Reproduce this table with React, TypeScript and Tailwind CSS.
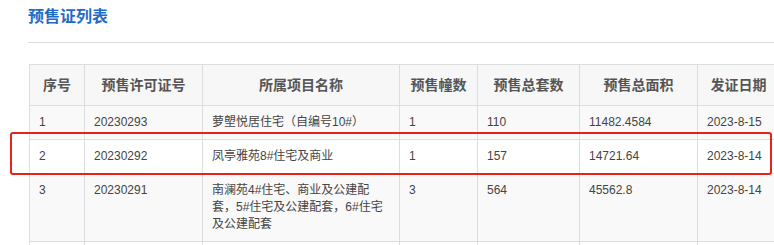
import React from "react";

const cols = [55, 118, 197, 78, 102, 118, 82];

const headers = ["序号", "预售许可证号", "所属项目名称", "预售幢数", "预售总套数", "预售总面积", "发证日期"];

const rows = [
  ["1", "20230293", "萝塱悦居住宅（自编号10#）", "1", "110", "11482.4584", "2023-8-15"],
  ["2", "20230292", "凤亭雅苑8#住宅及商业", "1", "157", "14721.64", "2023-8-14"],
  ["3", "20230291", "南澜苑4#住宅、商业及公建配套，5#住宅及公建配套，6#住宅及公建配套", "3", "564", "45562.8", "2023-8-14"],
];

export default function App() {
  return (
    <div
      className="relative w-[774px] h-[245px] overflow-hidden bg-white"
      style={{ fontFamily: '"Liberation Sans", "Noto Sans CJK SC", sans-serif' }}
    >
      <div className="pl-[28px] pt-[7px]">
        <h2 className="text-[16px] leading-[20px] font-bold text-[#1f6cc8]">预售证列表</h2>
        <div className="mt-[15px] h-px bg-[#dcdcdc]" />
      </div>

      <div className="ml-[29px] mt-[21px]">
        <table className="table-fixed border-collapse w-[750px]">
          <colgroup>
            {cols.map((w, i) => (
              <col key={i} style={{ width: w }} />
            ))}
          </colgroup>
          <thead>
            <tr className="bg-[#f7f7f7]">
              {headers.map((h) => (
                <th
                  key={h}
                  className="border border-[#dddddd] py-[11px] text-center text-[14px] leading-[18px] font-semibold text-[#555555]"
                >
                  {h}
                </th>
              ))}
            </tr>
          </thead>
          <tbody>
            {rows.map((r, ri) => (
              <tr key={ri} className={ri === 1 ? "bg-white" : "bg-[#f9f9f9]"}>
                {r.map((c, ci) => (
                  <td
                    key={ci}
                    className="border border-[#dddddd] px-[9px] py-2 align-top text-left text-[12px] leading-[17px] text-[#444444]"
                  >
                    {c}
                  </td>
                ))}
              </tr>
            ))}
            <tr className="bg-white">
              {cols.map((_, i) => (
                <td key={i} className="border border-[#dddddd] h-[20px]" />
              ))}
            </tr>
          </tbody>
        </table>
      </div>

      {/* highlight box */}
      <div className="absolute left-[10px] top-[132px] w-[762px] h-[43px] rounded-[3px] border-[2.5px] border-[#e5231d]" />
    </div>
  );
}
